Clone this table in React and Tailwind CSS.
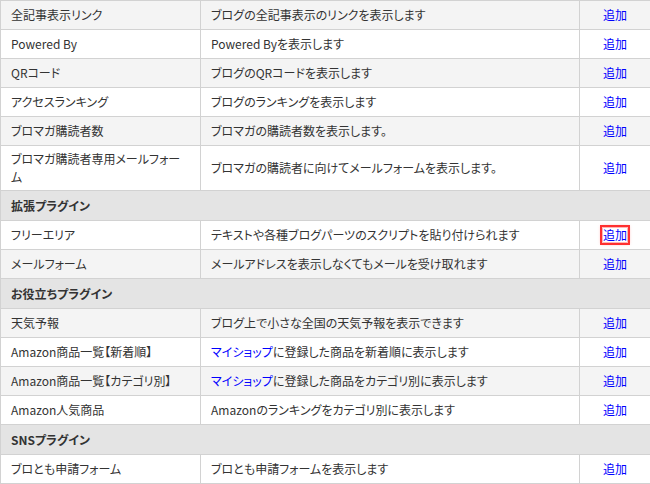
import React from "react";

const sections = [
  {
    title: null,
    rows: [
      { name: "全記事表示リンク", desc: "ブログの全記事表示のリンクを表示します" },
      { name: "Powered By", desc: "Powered Byを表示します" },
      { name: "QRコード", desc: "ブログのQRコードを表示します" },
      { name: "アクセスランキング", desc: "ブログのランキングを表示します" },
      { name: "ブロマガ購読者数", desc: "ブロマガの購読者数を表示します。" },
      { name: "ブロマガ購読者専用メールフォーム", desc: "ブロマガの購読者に向けてメールフォームを表示します。", tall: true },
    ],
  },
  {
    title: "拡張プラグイン",
    rows: [
      { name: "フリーエリア", desc: "テキストや各種ブログパーツのスクリプトを貼り付けられます", focus: true },
      { name: "メールフォーム", desc: "メールアドレスを表示しなくてもメールを受け取れます" },
    ],
  },
  {
    title: "お役立ちプラグイン",
    rows: [
      { name: "天気予報", desc: "ブログ上で小さな全国の天気予報を表示できます" },
      { name: "Amazon商品一覧【新着順】", shop: "に登録した商品を新着順に表示します" },
      { name: "Amazon商品一覧【カテゴリ別】", shop: "に登録した商品をカテゴリ別に表示します" },
      { name: "Amazon人気商品", desc: "Amazonのランキングをカテゴリ別に表示します" },
    ],
  },
  {
    title: "SNSプラグイン",
    rows: [{ name: "ブロとも申請フォーム", desc: "ブロとも申請フォームを表示します" }],
  },
];

function Row({ row, shaded }) {
  const bg = shaded ? "bg-[#f4f4f4]" : "bg-white";
  return (
    <tr className={`${bg} ${row.tall ? "h-[45px]" : "h-[29px]"}`}>
      <td className="border border-[#d2d2d2] px-[10px] leading-[18px] align-middle">{row.name}</td>
      <td className="border border-[#d2d2d2] px-[10px] align-middle">
        {row.shop ? (
          <>
            <a className="text-[#0000ff]">マイショップ</a>
            {row.shop}
          </>
        ) : (
          row.desc
        )}
      </td>
      <td className="border border-[#d2d2d2] text-center align-middle">
        <a
          className={`inline-block text-[#0000ff] leading-[14px] ${
            row.focus ? "outline-2 outline-[#ff3030] outline-offset-[1px] shadow-[0_0_3px_2px_rgba(255,80,80,0.5)]" : ""
          }`}
        >
          追加
        </a>
      </td>
    </tr>
  );
}

export default function App() {
  return (
    <div className="w-[650px] bg-white text-[12px] text-[#333] font-['Noto_Sans_CJK_JP','Noto_Sans',sans-serif] [font-feature-settings:'palt']">
      <table className="w-[650px] table-fixed border-collapse">
        <colgroup>
          <col className="w-[200px]" />
          <col className="w-[379px]" />
          <col className="w-[71px]" />
        </colgroup>
        <tbody>
          {sections.map((s, si) => (
            <React.Fragment key={si}>
              {s.title && (
                <tr className="h-[30px] bg-[#e4e4e4]">
                  <td colSpan={3} className="border border-[#d2d2d2] px-[10px] font-bold text-[#333]">
                    {s.title}
                  </td>
                </tr>
              )}
              {s.rows.map((r, ri) => {
                const shaded = si === 0 ? ri % 2 === 0 : si === 1 ? ri % 2 === 1 : si === 2 ? ri % 2 === 0 : false;
                return <Row key={ri} row={r} shaded={shaded} />;
              })}
            </React.Fragment>
          ))}
        </tbody>
      </table>
    </div>
  );
}
